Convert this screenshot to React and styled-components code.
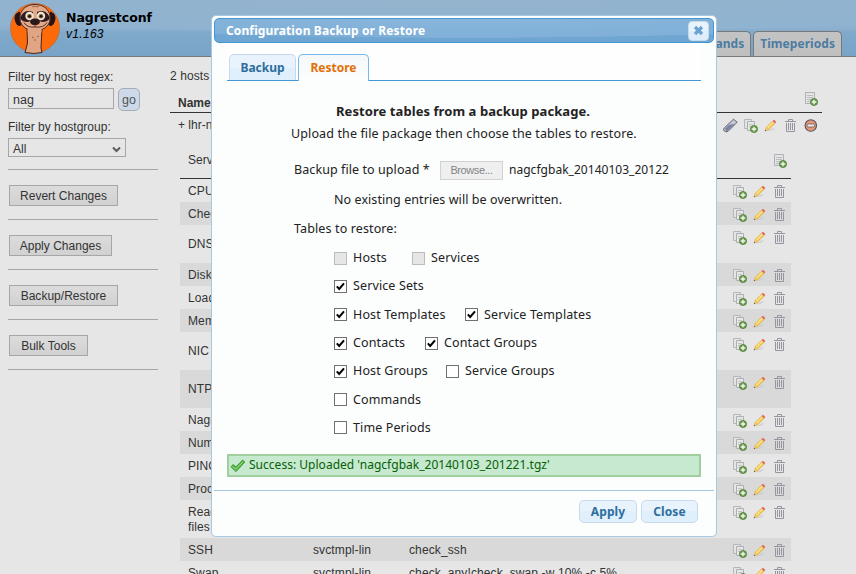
import React from 'react';
import styled, { createGlobalStyle } from 'styled-components';

const Global = createGlobalStyle`
  * { box-sizing: border-box; }
  body { margin: 0; overflow: hidden; background: #e6e6e6; }
`;

const sans = '"Liberation Sans", Arial, sans-serif';
const ui = '"Noto Sans", "Lucida Sans", sans-serif';

const Page = styled.div`
  position: relative;
  width: 856px;
  height: 574px;
  overflow: hidden;
  background: #e6e6e6;
  color: #333;
  font: 12px/15px ${sans};
`;

const Header = styled.header`
  display: flex;
  align-items: flex-end;
  justify-content: space-between;
  height: 57px;
  padding: 0 14px 0 10px;
  border-bottom: 1px solid #77797b;
  background:
    radial-gradient(ellipse 700px 32px at 50% 0, #94b3cd 0, #8fb3d0 98%, transparent 100%),
    linear-gradient(#93b3ce 0, #8cb0ce 29px, #80a9cb 32px, #79a4c7 100%);
`;

const Brand = styled.div`
  display: flex;
  align-self: flex-start;
  padding-top: 3px;
  gap: 6px;
`;

const BrandText = styled.div`
  display: flex;
  flex-direction: column;
  padding-top: 6px;
  color: #000;
`;

const BrandName = styled.strong`
  font: bold 12.5px/17px "DejaVu Sans", Verdana, sans-serif;
  letter-spacing: -0.02px;
`;

const Version = styled.em`
  font: italic 12px/16px ${sans};
  letter-spacing: 0.3px;
`;

const Nav = styled.nav`
  display: flex;
  gap: 2px;
`;

const NavTab = styled.div`
  height: 25px;
  padding: 0 6px;
  border: 1px solid #77797b;
  border-bottom: 0;
  border-radius: 5px 5px 0 0;
  background: linear-gradient(#c3c3c3, #bfbfbf);
  color: #4c7ca2;
  font: bold 12px/24px ${ui};
  letter-spacing: 0.05px;
`;

const Columns = styled.div`
  display: grid;
  grid-template-columns: 150px 652px;
  column-gap: 12px;
  padding: 0 0 0 8px;
`;

const Sidebar = styled.aside`
  display: flex;
  flex-direction: column;
  padding-top: 12px;
`;

const FieldLabel = styled.label`
  height: 15px;
  line-height: 16px;
`;

const FilterRow = styled.div`
  display: flex;
  gap: 4px;
  margin: 4px 0 8px;
`;

const TextField = styled.div`
  width: 106px;
  height: 21px;
  padding: 0 4px;
  border: 1px solid #a6a6a6;
  font-size: 12.5px;
  line-height: 22px;
`;

const GoButton = styled.button`
  width: 22px;
  height: 23px;
  padding: 0;
  border: 1px solid #a4adb5;
  border-radius: 5px;
  background: #cdd9e8;
  color: #555;
  font: 12.5px/20px ${sans};
`;

const SelectBox = styled.div`
  display: flex;
  align-items: center;
  justify-content: space-between;
  width: 118px;
  height: 19px;
  margin: 4px 0 12px;
  padding: 3px 4px 0;
  border: 1px solid #a6a6a6;
`;

const Divider = styled.hr`
  width: 150px;
  height: 1px;
  margin: 0;
  border: 0;
  background: #a6a6a6;
`;

const SideAction = styled.div`
  height: 50px;
  padding: 15px 0 0 1px;
  border-bottom: 1px solid #a6a6a6;
`;

const SideButton = styled.button`
  height: 21px;
  width: ${p => p.$w}px;
  padding: 2px 0 0;
  border: 1px solid #a6a6a6;
  background: linear-gradient(#dcdcdc, #d1d1d1);
  color: #333;
  font: 12px/17px ${sans};
  letter-spacing: 0.02px;
  white-space: nowrap;
`;

const Main = styled.main`
  display: flex;
  flex-direction: column;
  padding-top: 12px;
`;

const Count = styled.div`
  height: 15px;
  letter-spacing: 0.1px;
`;

const HostHead = styled.div`
  display: flex;
  justify-content: space-between;
  height: 29px;
  padding: 8px 4px 0 8px;
  border-bottom: 1px solid #333;
  font-weight: bold;
  line-height: 23px;
`;

const HostRow = styled.div`
  display: flex;
  justify-content: space-between;
  height: 34px;
  padding: 5px 4px 0 8px;
`;

const Services = styled.section`
  width: 611px;
  margin-left: 10px;
`;

const ServiceHead = styled.div`
  display: flex;
  justify-content: space-between;
  height: 32px;
  padding: 6px 4px 0 8px;
  border-bottom: 1px solid #333;
`;

const ServiceRow = styled.div`
  display: grid;
  grid-template-columns: 125px 96px 1fr auto;
  height: ${p => (p.$tall ? 38 : 23)}px;
  padding: 0 4px 0 8px;
  background: ${p => (p.$odd ? '#d9d9d9' : 'transparent')};
  letter-spacing: 0.12px;
`;

const Cell = styled.div`
  align-self: center;
  padding-top: 1px;
  max-width: ${p => (p.$narrow ? '60px' : 'none')};
  white-space: ${p => (p.$narrow ? 'normal' : 'nowrap')};
`;

const Icons = styled.div`
  display: flex;
  gap: 5px;
  height: 15px;
  margin-top: ${p => p.$top || 0}px;
`;

const Dialog = styled.section`
  position: absolute;
  left: 211px;
  top: 15px;
  display: flex;
  flex-direction: column;
  width: 506px;
  height: 522px;
  padding: 2px;
  border: 1px solid #a6c9e2;
  border-radius: 5px;
  background: #fcfdfd;
  color: #222;
  font-family: ${ui};
`;

const TitleBar = styled.div`
  display: flex;
  align-items: center;
  justify-content: space-between;
  height: 25px;
  padding: 0 4px 0 11px;
  border: 1px solid #4297d7;
  border-radius: 5px;
  background:
    radial-gradient(ellipse 420px 19px at 50% 0, #88b5db 0, #80b0d8 97%, transparent 100%),
    linear-gradient(#8ab6db 0, #7aabd4 12px, #70a7d2 16px, #6fa6d1 100%);
  color: #fff;
  font: bold 12px/22px ${ui};
  letter-spacing: 0.12px;
`;

const CloseButton = styled.button`
  display: grid;
  place-items: center;
  width: 21px;
  height: 20px;
  padding: 0;
  border: 1px solid #c5dbec;
  border-radius: 4px;
  background: linear-gradient(#e9f3fc 50%, #ddedfa 50%);
`;

const Tabs = styled.div`
  display: flex;
  align-items: flex-end;
  gap: 2px;
  height: 38px;
  margin: 0 13px;
  padding-left: 2px;
  border-bottom: 1px solid #4297d7;
  background: #fefefe;
`;

const Tab = styled.div`
  width: ${p => p.$w}px;
  height: ${p => (p.$active ? 27 : 26)}px;
  margin-bottom: ${p => (p.$active ? -1 : 0)}px;
  border: 1px solid ${p => (p.$active ? '#79b7e7' : '#c5dbec')};
  border-bottom: 0;
  border-radius: 5px 5px 0 0;
  background: ${p => (p.$active ? 'linear-gradient(#f5f8f9, #fcfdfd)' : 'linear-gradient(#e8f3fd 50%, #dfeffc 50%)')};
  color: ${p => (p.$active ? '#e17009' : '#2e6e9e')};
  font: bold 12px/26px ${ui};
  text-align: center;
`;

const Panel = styled.div`
  display: flex;
  flex-direction: column;
  height: 373px;
  padding: 19px 0 0 80px;
  font-size: 12.5px;
  line-height: 20px;
  letter-spacing: 0.12px;
`;

const Heading = styled.h3`
  margin: 0 82px 0 0;
  text-align: center;
  font: bold 13px/22px ${ui};
  letter-spacing: 0.07px;
`;

const Intro = styled.p`
  margin: 1px 0 0 -2px;
  line-height: 22px;
  white-space: nowrap;
  text-indent: -1px;
`;

const UploadRow = styled.div`
  display: flex;
  align-items: center;
  height: 22px;
  margin: 14px 0 9px;
  line-height: 20px;
`;

const Prompt = styled.span`
  width: 146px;
  letter-spacing: 0.08px;
`;

const Browse = styled.button`
  width: 63px;
  height: 19px;
  margin-right: 6px;
  padding: 0;
  border: 1px solid #d2d2d2;
  background: #efefef;
  color: #838383;
  font: 11px/16px ${sans};
  letter-spacing: -0.4px;
`;

const FileName = styled.span`
  font-size: 12px;
  letter-spacing: 0.03px;
`;

const Note = styled.div`
  padding-left: 40px;
  line-height: 20px;
  letter-spacing: 0.07px;
`;

const TablesTitle = styled.div`
  margin-top: 9px;
`;

const CheckList = styled.div`
  display: grid;
  grid-template-rows: 28px 28px 29px 28px 28px 29px 27px;
  margin-top: 5px;
  padding-left: 40px;
`;

const CheckRow = styled.div`
  display: grid;
  grid-template-columns: ${p => p.$first}px auto;
  align-items: center;
`;

const Check = styled.label`
  display: flex;
  align-items: center;
  gap: 6px;
  white-space: nowrap;
`;

const Box = styled.span`
  display: grid;
  place-items: center;
  flex: none;
  width: 13px;
  height: 13px;
  border: 1px solid ${p => (p.$disabled ? '#bcbcbc' : '#707070')};
  background: ${p => (p.$disabled ? '#e6e6e6' : '#fff')};
`;

const Success = styled.div`
  display: flex;
  align-items: center;
  gap: 3px;
  height: 23px;
  margin: 0 13px;
  padding: 0 2px 0 1px;
  border: 2px solid #9fcf9f;
  background: #c6e9cf;
  color: #066006;
  font-size: 12px;
  line-height: 18px;
  letter-spacing: 0.02px;
`;

const SuccessText = styled.span`
  padding-bottom: 1px;
`;

const Footer = styled.footer`
  display: flex;
  justify-content: flex-end;
  gap: 4px;
  margin-top: 13px;
  padding: 9px 16px 0 0;
  border-top: 1px solid #a6c9e2;
`;

const DialogButton = styled.button`
  width: ${p => p.$w}px;
  height: 23px;
  padding: 0;
  border: 1px solid #c5dbec;
  border-radius: 5px;
  background: linear-gradient(#e8f3fd 50%, #dfeffc 50%);
  color: #2e6e9e;
  font: bold 12px/20px ${ui};
  letter-spacing: 0.1px;
`;

const Logo = () => (
  <svg width="50" height="51" viewBox="0 0 50 51">
    <circle cx="25" cy="25" r="24.5" fill="#fd6a0a" stroke="#b66b3d" strokeWidth=".7" />
    <path d="M17 25 17.5 40 16 46 15 49.5Q24 51.5 32 49.5L31 45 32 25Z" fill="#e0a684" stroke="#4b2218" />
    <path d="M9 10Q4 12 6 18T11 21ZM41 10Q46 12 44 18T39 21Z" fill="#24151a" stroke="#24151a" strokeWidth="2" />
    <path d="M25 1.5C17 1.5 11 6 10 13C9 21 14 27 25 28C36 27 41 21 40 13C39 6 33 1.5 25 1.5Z" fill="#e3aa89" stroke="#58291c" />
    <path d="M17.7 25.5h13.8v4H17.7z" fill="#e0a684" />
    <path d="M11 13Q15 6 23 9Q24 17 18 19Q12 19 10 15ZM39 13Q35 6 27 9Q26 17 32 19Q38 19 40 15Z" fill="#321c20" />
    <circle cx="19.5" cy="13" r="4.2" fill="#f1e5d6" /><circle cx="31" cy="13" r="4.2" fill="#f1e5d6" />
    <circle cx="19.5" cy="13.3" r="2.3" fill="#806039" /><circle cx="31" cy="13.3" r="2.3" fill="#806039" />
    <circle cx="19.5" cy="13.3" r="1.2" fill="#111" /><circle cx="31" cy="13.3" r="1.2" fill="#111" />
    <ellipse cx="25" cy="18.8" rx="5" ry="3.3" fill="#28191b" />
    <path d="M14 19.5Q17 25 25 24Q34 25 37 19.5M25 21v3" fill="none" stroke="#572b20" />
    <path d="M22 3q2 2 3 0 2 2 4 0M22 34l2 1m3-1 2-1m-4 3v2" fill="none" stroke="#99583d" strokeWidth=".9" />
  </svg>
);

const Plus = () => (
  <g>
    <circle cx="11" cy="11" r="3.6" fill="#6b9c4c" stroke="#487737" strokeWidth=".7" />
    <path d="M11 8.7v4.6M8.7 11h4.6" stroke="#f0f5eb" strokeWidth="1.4" />
  </g>
);

const AddIcon = () => (
  <svg width="15" height="15" viewBox="0 0 15 15">
    <path d="M2.5 1.5h9v11h-9z" fill="#e4e4e6" stroke="#b0b1b4" />
    <path d="M4 4.5h6M4 6.5h6M4 8.5h4M4 10.5h3" stroke="#bcbdc0" />
    <Plus />
  </svg>
);

const CopyIcon = () => (
  <svg width="15" height="15" viewBox="0 0 15 15">
    <path d="M1.5 1.5h7v9h-7z" fill="#e4e4e6" stroke="#b6b7ba" />
    <path d="M4.5 3.5h7v9h-7z" fill="#e7e7e8" stroke="#adaeb1" />
    <path d="M6 6.5h4M6 8.5h2" stroke="#c2c2c2" />
    <Plus />
  </svg>
);

const PencilIcon = () => (
  <svg width="15" height="15" viewBox="0 0 15 15">
    <path d="M3 13.5 10 12.3 12 9.5Z" fill="#c9c9c9" opacity=".8" />
    <path d="M2 13 3.3 9.3 9.6 3 12 5.4 5.7 11.7Z" fill="#f2c74e" stroke="#d7a243" strokeWidth=".5" />
    <path d="M4.5 10 10.6 4" stroke="#fbe48b" strokeWidth="1.4" />
    <path d="M9.6 3 11 1.8 13.3 4 12 5.4Z" fill="#e0625a" />
    <path d="M2 13 3 10.2 4.8 12Z" fill="#e5c39b" />
    <path d="M1.7 13.3 2.4 11.7 3.3 12.6Z" fill="#563c32" />
  </svg>
);

const TrashIcon = () => (
  <svg width="15" height="15" viewBox="0 0 15 15" fill="none" stroke="#96959f">
    <path d="M2 3.5h11M5.5 3V1.5h4V3M3.5 5v8.5h8V5M5.5 5v7M7.5 5v7M9.5 5v7" />
  </svg>
);

const TubeIcon = () => (
  <svg width="15" height="15" viewBox="0 0 15 15">
    <path d="M1.2 10 10.5 1.2 14.2 4.2 5 13.4Q2.7 14.5 1.3 13T1.2 10Z" fill="#c5c8d2" stroke="#62616e" />
    <path d="M2 10.7 6 6.7 11.6 6 4.6 12.7Q2.6 13.5 2 10.7Z" fill="#7d83a5" />
  </svg>
);

const MinusIcon = () => (
  <svg width="15" height="15" viewBox="0 0 15 15">
    <circle cx="7.8" cy="7.5" r="5.7" fill="#e69874" stroke="#555261" strokeWidth="1.1" />
    <rect x="4.1" y="6" width="7.4" height="3" rx="1" fill="#eeeae9" stroke="#6c5c60" strokeWidth=".8" />
  </svg>
);

const Tick = () => (
  <svg width="9" height="9" viewBox="0 0 9 9">
    <path d="M.8 4.4 3.2 7 8 1.3" fill="none" stroke="#000" strokeWidth="2" />
  </svg>
);

const Chevron = () => (
  <svg width="9" height="7" viewBox="0 0 9 7">
    <path d="M1 1.5 4.5 5 8 1.5" fill="none" stroke="#5c5c5c" strokeWidth="2" />
  </svg>
);

const Cross = () => (
  <svg width="11" height="11" viewBox="0 0 11 11">
    <path d="M2 2 9 9M9 2 2 9" stroke="#6aa3d2" strokeWidth="3.2" />
  </svg>
);

const SuccessTick = () => (
  <svg width="16" height="15" viewBox="0 0 16 15">
    <path d="M1 8.8 3.3 6.5 5.8 9 12.7 2 14.8 4 6 13.6Z" fill="#59b946" stroke="#338c2c" strokeWidth=".9" />
    <path d="M2.4 8.7 5.8 11.2 13.2 3.6" fill="none" stroke="#98db7c" strokeWidth="1" />
  </svg>
);

const services = [
  { name: 'CPU' },
  { name: 'Check' },
  { name: 'DNS', tall: true },
  { name: 'Disk' },
  { name: 'Load' },
  { name: 'Memory' },
  { name: 'NIC', tall: true },
  { name: 'NTP', tall: true },
  { name: 'Nagios' },
  { name: 'Number' },
  { name: 'PING' },
  { name: 'Processes' },
  { name: 'Read-only files', tall: true },
  { name: 'SSH', template: 'svctmpl-lin', command: 'check_ssh' },
  { name: 'Swap', template: 'svctmpl-lin', command: 'check_any!check_swap -w 10% -c 5%' },
];

const checkRows = [
  { first: 78, items: [['Hosts', false, true], ['Services', false, true]] },
  { first: 100, items: [['Service Sets', true]] },
  { first: 131, items: [['Host Templates', true], ['Service Templates', true]] },
  { first: 91, items: [['Contacts', true], ['Contact Groups', true]] },
  { first: 112, items: [['Host Groups', true], ['Service Groups', false]] },
  { first: 112, items: [['Commands', false]] },
  { first: 112, items: [['Time Periods', false]] },
];

const sideActions = [['Revert Changes', 109], ['Apply Changes', 103], ['Backup/Restore', 109], ['Bulk Tools', 79]];

export default function App() {
  return (
    <Page>
      <Global />
      <Header>
        <Brand>
          <Logo />
          <BrandText>
            <BrandName>Nagrestconf</BrandName>
            <Version>v1.163</Version>
          </BrandText>
        </Brand>
        <Nav>
          <NavTab>Commands</NavTab>
          <NavTab>Timeperiods</NavTab>
        </Nav>
      </Header>
      <Columns>
        <Sidebar>
          <FieldLabel>Filter by host regex:</FieldLabel>
          <FilterRow>
            <TextField>nag</TextField>
            <GoButton>go</GoButton>
          </FilterRow>
          <FieldLabel>Filter by hostgroup:</FieldLabel>
          <SelectBox>All<Chevron /></SelectBox>
          <Divider />
          {sideActions.map(([label, width]) => (
            <SideAction key={label}><SideButton $w={width}>{label}</SideButton></SideAction>
          ))}
        </Sidebar>
        <Main>
          <Count>2 hosts</Count>
          <HostHead>
            Name
            <Icons $top={-1}><AddIcon /></Icons>
          </HostHead>
          <HostRow>
            + lhr-n
            <Icons><TubeIcon /><CopyIcon /><PencilIcon /><TrashIcon /><MinusIcon /></Icons>
          </HostRow>
          <Services>
            <ServiceHead>
              Service
              <Icons><AddIcon /></Icons>
            </ServiceHead>
            {services.map((s, i) => (
              <ServiceRow key={s.name} $tall={s.tall} $odd={i % 2 === 1}>
                <Cell $narrow={s.tall}>{s.name}</Cell>
                <Cell>{s.template}</Cell>
                <Cell>{s.command}</Cell>
                <Icons $top={5}><CopyIcon /><PencilIcon /><TrashIcon /></Icons>
              </ServiceRow>
            ))}
          </Services>
        </Main>
      </Columns>
      <Dialog>
        <TitleBar>
          Configuration Backup or Restore
          <CloseButton aria-label="Close dialog"><Cross /></CloseButton>
        </TitleBar>
        <Tabs>
          <Tab $w={67}>Backup</Tab>
          <Tab $w={71} $active>Restore</Tab>
        </Tabs>
        <Panel>
          <Heading>Restore tables from a backup package.</Heading>
          <Intro>Upload the file package then choose the tables to restore.</Intro>
          <UploadRow>
            <Prompt>Backup file to upload *</Prompt>
            <Browse>Browse...</Browse>
            <FileName>nagcfgbak_20140103_20122</FileName>
          </UploadRow>
          <Note>No existing entries will be overwritten.</Note>
          <TablesTitle>Tables to restore:</TablesTitle>
          <CheckList>
            {checkRows.map((row) => (
              <CheckRow key={row.items[0][0]} $first={row.first}>
                {row.items.map(([label, checked, disabled]) => (
                  <Check key={label}>
                    <Box $disabled={disabled}>{checked && <Tick />}</Box>
                    {label}
                  </Check>
                ))}
              </CheckRow>
            ))}
          </CheckList>
        </Panel>
        <Success>
          <SuccessTick />
          <SuccessText>Success: Uploaded 'nagcfgbak_20140103_201221.tgz'</SuccessText>
        </Success>
        <Footer>
          <DialogButton $w={58}>Apply</DialogButton>
          <DialogButton $w={57}>Close</DialogButton>
        </Footer>
      </Dialog>
    </Page>
  );
}
